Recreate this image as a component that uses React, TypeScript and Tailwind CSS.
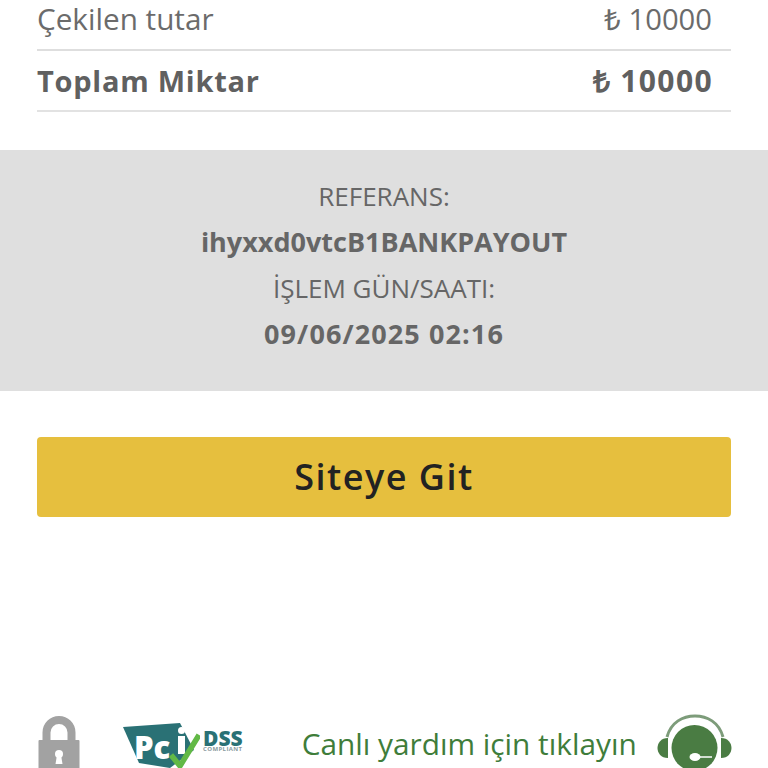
const font = "font-['Open_Sans',sans-serif]";

function LockIcon() {
  return (
    <svg width="42" height="53" viewBox="0 0 42 53" className="shrink-0">
      <path d="M8.5 26V16.5a12.5 12.5 0 0 1 25 0V26" fill="none" stroke="#a2a2a2" strokeWidth="8" />
      <rect x="0.5" y="24" width="41" height="29" rx="1" fill="#a2a2a2" />
      <circle cx="21" cy="38" r="4" fill="#fff" />
      <path d="M19 39h4l1.5 9h-7z" fill="#fff" />
    </svg>
  );
}

function PciMark() {
  return (
    <svg width="80" height="48" viewBox="0 0 80 48" className="shrink-0">
      <path d="M3 7 L60 3 L74 30 L50 48 L19 43 Z" fill="#2a7175" />
      <text x="14" y="39" fontFamily="Open Sans, sans-serif" fontWeight="800" fontSize="31" fill="#fff">Pc</text>
      <circle cx="61.5" cy="10.5" r="3.5" fill="#fff" />
      <rect x="58" y="16" width="7" height="18" fill="#fff" />
      <path d="M51 35 L60 46 L79 15" fill="none" stroke="#62b946" strokeWidth="5.5" />
    </svg>
  );
}

function SupportIcon() {
  return (
    <svg width="76" height="54" viewBox="0 0 76 54" className="shrink-0">
      <path d="M11 23C15 8 27 2 39 2s24 6 28 21" fill="none" stroke="#7d9c7a" strokeWidth="3" />
      <circle cx="38.5" cy="34" r="23" fill="#4a7c43" />
      <path d="M12 24C5 24 1.5 29 1.5 34s3.5 10 10.5 10z" fill="#4a7c43" />
      <path d="M65 24c7 0 10.5 5 10.5 10s-3.500 10-10.500 10z" fill="#4a7c43" />
      <path d="M42 43H56" stroke="#fff" strokeWidth="1.5" />
      <ellipse cx="39" cy="43" rx="5.500" ry="4" fill="#fff" />
    </svg>
  );
}

export default function App() {
  return (
    <div className={`h-[768px] w-[768px] overflow-hidden bg-white ${font}`}>
      <div className="px-[37px] pt-[1px]">
        <div className="flex h-[50px] items-center justify-between border-b-2 border-[#dedede] pr-[19px] pb-[12px] text-[29.7px] leading-[36px] text-[#6b6b6b]">
          <span>Çekilen tutar</span>
          <span className="text-[29.2px]">₺ 10000</span>
        </div>
        <div className="flex h-[61px] items-center justify-between border-b-2 border-[#e2e2e2] pr-[18px] text-[29px] font-bold tracking-[0.75px] text-[#606060]">
          <span>Toplam Miktar</span>
          <span className="text-[30px] tracking-[1.4px]">₺ 10000</span>
        </div>
      </div>

      <div className="mt-[38px] flex h-[241px] flex-col items-center justify-center bg-[#dfdfdf] pb-[12px] text-[26px] leading-[46px] text-[#666666]">
        <span>REFERANS:</span>
        <span className="text-[27px] font-bold">ihyxxd0vtcB1BANKPAYOUT</span>
        <span>İŞLEM GÜN/SAATI:</span>
        <span className="text-[27px] font-bold tracking-[1.1px]">09/06/2025 02:16</span>
      </div>

      <div className="mt-[46px] px-[37px]">
        <button className="flex h-[80px] w-full items-center justify-center rounded-[4px] bg-[#e6bf3e] text-[36px] font-semibold tracking-[1.5px] text-[#222222]">
          Siteye Git
        </button>
      </div>

      <div className="mt-[198px] flex items-start px-[37px]">
        <div className="ml-[1px] mt-[1px]">
          <LockIcon />
        </div>
        <div className="ml-[40px] mt-[5px] flex w-[125px] items-start">
          <PciMark />
          <div className="ml-[3px] mt-[10px] flex flex-col">
            <span className="h-[16px] text-[21px] leading-[16px] font-extrabold text-[#2a7175]">DSS</span>
            <span className="mt-[1px] h-[5px] whitespace-nowrap text-[6px] leading-[5px] font-bold tracking-[0.4px] text-[#8a9a9e]">COMPLIANT</span>
          </div>
        </div>
        <span className="ml-[59px] mt-[7px] whitespace-nowrap text-[29.8px] text-[#3f7d3a]">
          Canlı yardım için tıklayın
        </span>
        <div className="ml-[19px] -mt-[1px]">
          <SupportIcon />
        </div>
      </div>
    </div>
  );
}
